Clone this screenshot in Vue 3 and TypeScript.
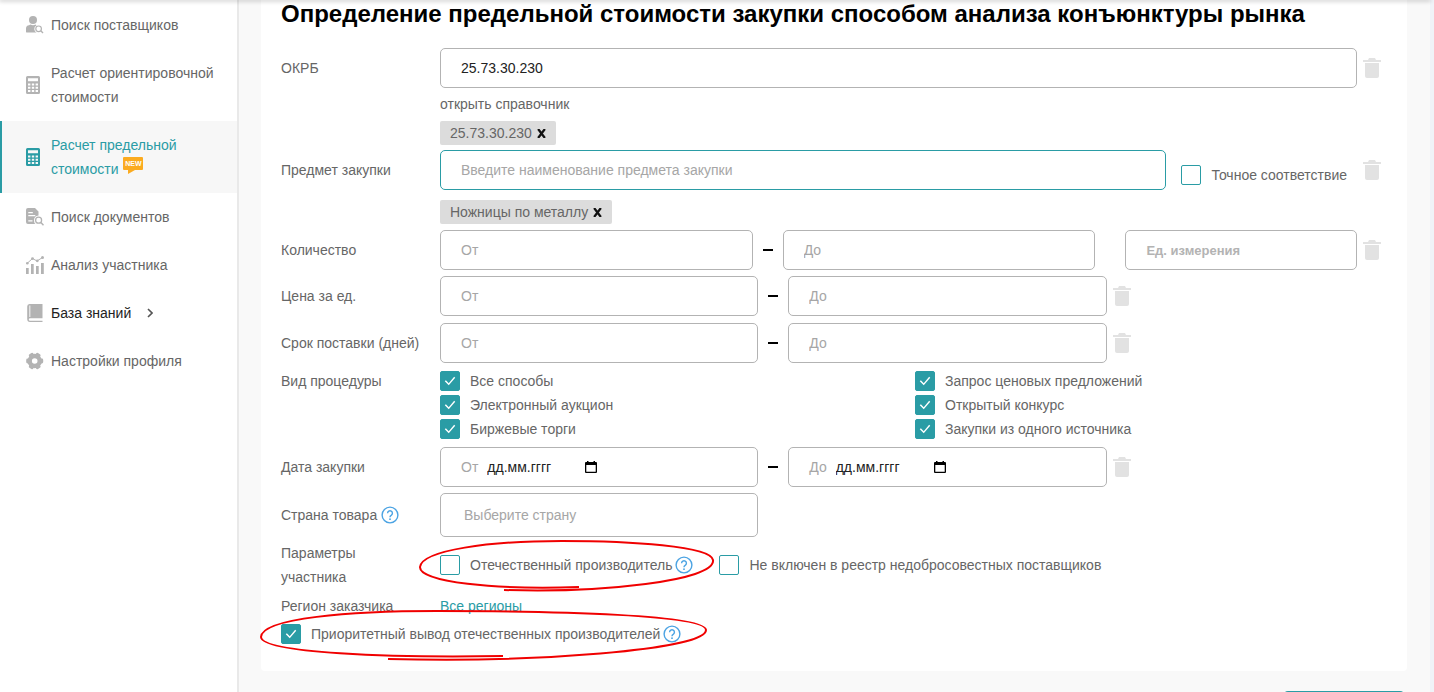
<script setup lang="ts">
import { ref } from 'vue'

interface MenuItem {
  icon: 'supplier' | 'calc' | 'docs' | 'chart' | 'book' | 'gear'
  label: string
  active?: boolean
  fresh?: boolean
  parent?: boolean
}

const menu: MenuItem[] = [
  { icon: 'supplier', label: 'Поиск поставщиков' },
  { icon: 'calc', label: 'Расчет ориентировочной стоимости' },
  { icon: 'calc', label: 'Расчет предельной стоимости', active: true, fresh: true },
  { icon: 'docs', label: 'Поиск документов' },
  { icon: 'chart', label: 'Анализ участника' },
  { icon: 'book', label: 'База знаний', parent: true },
  { icon: 'gear', label: 'Настройки профиля' },
]

const ranges = ref([
  { id: 'price', label: 'Цена за ед.', from: '', to: '' },
  { id: 'term', label: 'Срок поставки (дней)', from: '', to: '' },
])

const procedures = ref([
  { id: 'all', label: 'Все способы', on: true },
  { id: 'quote', label: 'Запрос ценовых предложений', on: true },
  { id: 'auction', label: 'Электронный аукцион', on: true },
  { id: 'tender', label: 'Открытый конкурс', on: true },
  { id: 'exchange', label: 'Биржевые торги', on: true },
  { id: 'single', label: 'Закупки из одного источника', on: true },
])

const dates = ref([
  { id: 'from', label: 'От', value: '' },
  { id: 'to', label: 'До', value: '' },
])

const code = ref('25.73.30.230')
const subject = ref('')
const exact = ref(false)
const qtyFrom = ref('')
const qtyTo = ref('')
const unit = ref('')
const country = ref('')
const domestic = ref(false)
const reliable = ref(false)
const priority = ref(true)
const codeTags = ref(['25.73.30.230'])
const subjectTags = ref(['Ножницы по металлу'])
</script>

<template>
  <div class="page">
    <svg class="defs" aria-hidden="true">
      <symbol id="trash" viewBox="0 0 18 20">
        <path d="M6 0h6l1 2h5v2H0V2h5zM2 5h14v13a2 2 0 0 1-2 2H4a2 2 0 0 1-2-2z" />
      </symbol>
      <symbol id="help" viewBox="0 0 18 18">
        <circle cx="9" cy="9" r="7.9" fill="none" stroke="currentColor" stroke-width="1.4" />
        <path d="M6.6 7.2a2.4 2.4 0 1 1 3.6 2.1c-.8.5-1.2.9-1.2 1.9" fill="none" stroke="currentColor" stroke-width="1.4" />
        <circle cx="9" cy="13.2" r="0.9" fill="currentColor" />
      </symbol>
    </svg>
    <header class="topbar"></header>

    <nav class="sidebar">
      <a v-for="item in menu" :key="item.label" href="#" class="item" :class="{ active: item.active, parent: item.parent }">
        <svg class="icon" viewBox="0 0 18 18" aria-hidden="true">
          <g v-if="item.icon === 'supplier'">
            <circle cx="7" cy="4" r="4" />
            <path d="M0 16v-3.500Q0 9.500 3 9.200L4.500 8.500Q7 10 9.500 8.500L10.500 9.200Q8 10.500 8.300 13.200Q8.500 15.500 10.500 16.500H1.500Q0 16.500 0 16z" />
            <circle cx="12.600" cy="12.800" r="2.800" fill="none" stroke="currentColor" stroke-width="1.200" />
            <path d="M14.800 14.800L17 17" stroke="currentColor" stroke-width="1.400" />
          </g>
          <path
            v-else-if="item.icon === 'calc'"
            fill-rule="evenodd"
            d="M1.500 0h11Q14 0 14 1.500v15Q14 18 12.500 18h-11Q0 18 0 16.500v-15Q0 0 1.500 0zM2 2.300v3h10v-3zM2 7.500v2h2.400v-2zM5.800 7.500v2h2.400v-2zM9.600 7.500v2H12v-2zM2 10.800v2h2.400v-2zM5.800 10.800v2h2.400v-2zM9.600 10.800v2H12v-2zM2 14v2h2.400v-2zM5.800 14v2h2.400v-2zM9.600 14v2H12v-2z"
          />
          <g v-else-if="item.icon === 'docs'">
            <path
              fill-rule="evenodd"
              d="M2 0h7l3.500 3.500V7.600Q8 8 8 12.500Q8 15 9.500 16H2Q0 16 0 14V2Q0 0 2 0zM2.300 4v1.200h4.500V4zM2.300 7v1.200h7V7zM2.300 12.200v1.200h4.200v-1.200z"
            />
            <circle cx="12.600" cy="12.200" r="3" fill="none" stroke="currentColor" stroke-width="1.300" />
            <path d="M14.900 14.500L17.500 17.200" stroke="currentColor" stroke-width="1.500" />
          </g>
          <g v-else-if="item.icon === 'chart'">
            <path d="M0 12h2.700v6H0zM5 8h2.700v10H5zM10 10h2.700v8H10zM15 7h2.800v11H15z" />
            <path d="M1 7.500L6.500 2.500L11 5L16.500 1.500" fill="none" stroke="currentColor" stroke-width="1" />
            <circle cx="1.300" cy="7.200" r="1.300" />
            <circle cx="6.500" cy="2.600" r="1.400" />
            <circle cx="11.300" cy="4.800" r="1.400" />
            <circle cx="16.500" cy="1.600" r="1.500" />
          </g>
          <path
            v-else-if="item.icon === 'book'"
            fill-rule="evenodd"
            d="M3.500 0H16.500V14.200H3.800Q2.600 14.500 2.800 15.800Q3 16.800 4 16.800H16.500V18H4Q1.200 18 1.200 15V2.500Q1.200 0 3.500 0zM3.400 1.500v11.500h.9V1.500z"
          />
          <g v-else>
            <circle cx="8.700" cy="9" r="5" fill="none" stroke="currentColor" stroke-width="4.400" />
            <g v-for="a in [30, 90, 150, 210, 270, 330]" :key="a">
              <rect x="6.200" y="0.500" width="5" height="4" rx="1.400" :transform="`rotate(${a} 8.700 9)`" />
            </g>
          </g>
        </svg>
        <span class="text">
          {{ item.label }}
          <span v-if="item.fresh" class="new">NEW</span>
          <svg v-if="item.parent" class="chevron" viewBox="0 0 6 10" aria-hidden="true">
            <path d="M1 1l4 4-4 4" fill="none" stroke="currentColor" stroke-width="1.600" />
          </svg>
        </span>
      </a>
    </nav>

    <main class="main">
      <form class="card" @submit.prevent>
        <h1>Определение предельной стоимости закупки способом анализа конъюнктуры рынка</h1>

        <div class="row">
          <label class="name" for="code">ОКРБ</label>
          <div class="wide">
            <input id="code" v-model="code" class="field" type="text" />
            <button class="trash" type="button" aria-label="Очистить ОКРБ"><svg><use href="#trash" /></svg></button>
          </div>
          <div class="under">
            <a href="#" class="directory">открыть справочник</a>
            <div class="tags">
              <span v-for="tag in codeTags" :key="tag" class="tag">
                {{ tag }}
                <button type="button" :aria-label="`Убрать ${tag}`">
                  <svg viewBox="0 0 8 8"><path d="M1 0l6 8M7 0L1 8" /></svg>
                </button>
              </span>
            </div>
          </div>
        </div>

        <div class="row">
          <label class="name" for="subject">Предмет закупки</label>
          <div class="wide">
            <div class="subject">
              <input id="subject" v-model="subject" class="field focus" type="text" placeholder="Введите наименование предмета закупки" />
              <label class="check exact"><input v-model="exact" type="checkbox" />Точное соответствие</label>
            </div>
            <button class="trash" type="button" aria-label="Очистить предмет закупки"><svg><use href="#trash" /></svg></button>
          </div>
          <div class="under second">
            <div class="tags">
              <span v-for="tag in subjectTags" :key="tag" class="tag">
                {{ tag }}
                <button type="button" :aria-label="`Убрать ${tag}`">
                  <svg viewBox="0 0 8 8"><path d="M1 0l6 8M7 0L1 8" /></svg>
                </button>
              </span>
            </div>
          </div>
        </div>

        <div class="row">
          <label class="name" for="qty-from">Количество</label>
          <div class="wide">
            <div class="quantity">
              <input id="qty-from" v-model="qtyFrom" class="field" type="text" placeholder="От" />
              <span class="dash"></span>
              <input v-model="qtyTo" class="field" type="text" placeholder="До" aria-label="Количество до" />
              <span></span>
              <input v-model="unit" class="field unit" type="text" placeholder="Ед. измерения" aria-label="Ед. измерения" />
            </div>
            <button class="trash" type="button" aria-label="Очистить количество"><svg><use href="#trash" /></svg></button>
          </div>
        </div>

        <div class="ranges">
          <div v-for="r in ranges" :key="r.id" class="row">
            <label class="name" :for="r.id">{{ r.label }}</label>
            <div class="narrow">
              <div class="range">
                <input :id="r.id" v-model="r.from" class="field" type="text" placeholder="От" />
                <span class="dash"></span>
                <input v-model="r.to" class="field" type="text" placeholder="До" :aria-label="`${r.label} до`" />
              </div>
              <button class="trash" type="button" :aria-label="`Очистить ${r.label}`"><svg><use href="#trash" /></svg></button>
            </div>
          </div>
        </div>

        <div class="row" role="group" aria-labelledby="proc">
          <span id="proc" class="name short">Вид процедуры</span>
          <div class="checks">
            <label v-for="p in procedures" :key="p.id" class="check"><input v-model="p.on" type="checkbox" />{{ p.label }}</label>
          </div>
        </div>

        <div class="row">
          <label class="name" for="date-from">Дата закупки</label>
          <div class="narrow">
            <div class="range">
              <template v-for="(d, i) in dates" :key="d.id">
                <span v-if="i > 0" class="dash"></span>
                <div class="field date">
                  <label :for="`date-${d.id}`">{{ d.label }}</label>
                  <input :id="`date-${d.id}`" v-model="d.value" type="text" placeholder="дд.мм.гггг" />
                  <button type="button" aria-label="Открыть календарь">
                    <svg viewBox="0 0 12 12"><path fill-rule="evenodd" d="M2 0h1.500v1h5V0H10v1h1q1 0 1 1v9q0 1-1 1H1q-1 0-1-1V2q0-1 1-1h1zM1.300 4v6.700h9.400V4z" /></svg>
                  </button>
                </div>
              </template>
            </div>
            <button class="trash" type="button" aria-label="Очистить дату закупки"><svg><use href="#trash" /></svg></button>
          </div>
        </div>

        <div class="row">
          <label class="name tall" for="country">Страна товара <svg class="help"><use href="#help" /></svg></label>
          <div class="narrow">
            <div class="range">
              <select id="country" v-model="country" class="field country">
                <option value="">Выберите страну</option>
              </select>
            </div>
          </div>
        </div>

        <div class="last">
          <div class="row" role="group" aria-labelledby="member">
            <span id="member" class="name short">Параметры<br />участника</span>
            <div class="params">
              <div class="marked">
                <label class="check"><input v-model="domestic" type="checkbox" />Отечественный производитель</label>
                <svg class="help"><use href="#help" /></svg>
                <svg class="loop first" viewBox="416 536 300 60" aria-hidden="true">
                  <path d="M504 590C600 593 716 581 713 560C711 546 630 541 562 541C490 541 422 550 420 567C419 582 495 590 579 587" />
                </svg>
              </div>
              <label class="check"><input v-model="reliable" type="checkbox" />Не включен в реестр недобросовестных поставщиков</label>
            </div>
          </div>

          <div class="row region-row">
            <span class="name short">Регион заказчика</span>
            <a href="#" class="region">Все регионы</a>
          </div>

          <div class="marked">
            <label class="check"><input v-model="priority" type="checkbox" />Приоритетный вывод отечественных производителей</label>
            <svg class="help"><use href="#help" /></svg>
            <svg class="loop second" viewBox="258 606 452 60" aria-hidden="true">
              <path d="M388 660C530 664 706 651 706 631C706 616 560 612 437 612C350 612 262 619 261 638C262 654 390 659 503 657" />
            </svg>
          </div>
        </div>
      </form>
      <div class="actions"><button type="submit" class="submit">Рассчитать</button></div>
    </main>
  </div>
</template>

<style>
body {
  margin: 0;
}
</style>

<style scoped>
* {
  box-sizing: border-box;
}
.page {
  display: flex;
  height: 100vh;
  overflow: hidden;
  background: #f9f9f9;
  border-right: 4px solid #f0f3f8;
  font: 14px/24px 'Liberation Sans', Arial, sans-serif;
  color: #666;
}
.defs {
  position: absolute;
  width: 0;
  height: 0;
}
.topbar {
  position: fixed;
  inset: 0 4px auto 0;
  height: 0;
  z-index: 2;
  box-shadow: 0 0 4px 1px rgba(0, 0, 0, 0.3);
}
button {
  padding: 0;
  border: 0;
  background: none;
  font: inherit;
  cursor: pointer;
}
a {
  color: inherit;
  text-decoration: none;
}

.sidebar {
  flex: 0 0 239px;
  padding-top: 1px;
  background: #fff;
  border-right: 2px solid #e9e9e9;
}
.item {
  display: flex;
  align-items: center;
  gap: 7px;
  padding: 12px 16px 12px 24px;
  border-left: 2px solid transparent;
}
.item.active {
  border-color: #2a9ca5;
  background: #f7f7f7;
  color: #2a9ca5;
}
.item.parent {
  color: #222;
}
.icon {
  flex: none;
  width: 18px;
  height: 18px;
  color: #b3b3b3;
  fill: currentColor;
}
.active .icon {
  color: #2a9ca5;
}
.new {
  display: inline-block;
  position: relative;
  width: 20px;
  height: 13px;
  margin-left: 1px;
  border-radius: 1px;
  background: #fbab20;
  color: #fff;
  font-size: 7px;
  font-weight: bold;
  line-height: 13px;
  text-align: center;
  vertical-align: 8px;
  margin-bottom: -8px;
  margin-top: -8px;
}
.new::after {
  content: '';
  position: absolute;
  left: 5px;
  top: 13px;
  border: solid transparent;
  border-width: 0 7px 4px 0;
  border-top: 4px solid #fbab20;
  border-bottom: 0;
}
.chevron {
  width: 6px;
  height: 10px;
  margin-left: 12px;
  color: #555;
}

.main {
  flex: 1;
  min-width: 0;
  padding: 0 23px 0 22px;
}
.card {
  display: flex;
  flex-direction: column;
  gap: 6px;
  padding: 0 26px 25px 20px;
  background: #fff;
  border-radius: 0 0 4px 4px;
}
h1 {
  margin: 0 0 14px;
  font-size: 24px;
  line-height: 28px;
  color: #000;
  white-space: nowrap;
}
.row {
  display: grid;
  grid-template-columns: 159px 1fr;
}
.name {
  line-height: 40px;
}
.name.short {
  line-height: 24px;
}
.name.tall {
  display: flex;
  align-items: center;
  gap: 4px;
}
.wide {
  display: grid;
  grid-template-columns: 1fr 18px;
  gap: 6px;
  align-items: center;
}
.ranges {
  display: flex;
  flex-direction: column;
  gap: 7px;
}
.narrow {
  display: grid;
  grid-template-columns: 17fr 7fr;
  align-items: center;
}
.narrow .trash {
  margin-left: 6px;
}
.range {
  display: grid;
  grid-template-columns: 1fr 30px 1fr;
  align-items: center;
}
.quantity {
  display: grid;
  grid-template-columns: 27fr 30px 27fr 30px 20fr;
  align-items: center;
}
.subject {
  display: flex;
  gap: 15px;
}
.subject .field {
  flex: 1;
}
.exact {
  padding: 10px 10px 0 0;
}
.field {
  width: 100%;
  min-width: 0;
  height: 40px;
  padding: 0 20px;
  border: 1px solid #b3b3b3;
  border-radius: 5px;
  outline: 0;
  background: #fff;
  font: inherit;
  color: #222;
}
.field.focus {
  border-color: #2a9ca5;
}
::placeholder {
  color: #a6a6a6;
  opacity: 1;
}
.unit::placeholder {
  font-size: 13px;
  font-weight: bold;
  color: #b3b3b3;
}
.dash {
  justify-self: center;
  width: 10px;
  height: 2px;
  background: #000;
}
.trash {
  width: 18px;
  height: 20px;
}
.trash svg {
  display: block;
  width: 18px;
  height: 20px;
  fill: #e2e2e2;
}
.under {
  grid-column: 2;
  padding-top: 4px;
}
.under.second {
  padding-top: 5px;
}
.directory {
  display: block;
}
.tags {
  display: flex;
  gap: 6px;
  padding-top: 5px;
}
.row:nth-of-type(1) .tags {
  margin-bottom: -1px;
}
.tag {
  display: flex;
  gap: 5px;
  padding: 0 10px;
  border-radius: 2px;
  background: #dcdcdc;
}
.tag button {
  display: flex;
  align-items: center;
}
.tag svg {
  width: 9px;
  height: 9px;
  stroke: #111;
  stroke-width: 2;
}
.checks {
  display: grid;
  grid-template-columns: 1fr 1fr;
  column-gap: 9px;
}
.check {
  display: flex;
  align-items: center;
  gap: 10px;
  white-space: nowrap;
}
.check input {
  appearance: none;
  flex: none;
  width: 20px;
  height: 20px;
  margin: 0;
  border: 1px solid #2a9ca5;
  border-radius: 2px;
  background: #fff;
}
.check input:checked {
  background: #2a9ca5;
}
.check input:checked::after {
  content: '';
  display: block;
  width: 18px;
  height: 18px;
  background: #fff;
  clip-path: polygon(21% 52%, 27% 46%, 43% 63%, 73% 27%, 79% 32%, 43% 74%);
}
.date {
  display: flex;
  align-items: center;
}
.date label {
  color: #a6a6a6;
}
.date input {
  width: 98px;
  margin-left: 9px;
  padding: 0;
  border: 0;
  outline: 0;
  font: inherit;
  color: #222;
}
.date ::placeholder {
  color: #222;
}
.date svg {
  display: block;
  width: 12px;
  height: 12px;
}
.country {
  appearance: none;
  height: 44px;
  padding: 0 23px;
  color: #a6a6a6;
}
.help {
  flex: none;
  width: 18px;
  height: 18px;
  color: #4ba3e3;
}
.last {
  display: flex;
  flex-direction: column;
  gap: 4px;
  margin-top: -2px;
}
.params {
  display: flex;
  align-items: center;
  gap: 26px;
}
.marked {
  position: relative;
  display: flex;
  align-items: center;
  gap: 3px;
}
.loop {
  position: absolute;
  height: 60px;
  fill: none;
  stroke: #f00000;
  stroke-width: 2;
  pointer-events: none;
}
.loop.first {
  left: -24px;
  top: -17px;
  width: 300px;
}
.loop.second {
  left: -23px;
  top: -17px;
  width: 452px;
}
.region-row {
  padding-top: 1px;
}
.region {
  color: #2a9ca5;
}
.actions {
  display: flex;
  justify-content: flex-end;
  padding: 20px 3px 0;
}
.submit {
  width: 120px;
  height: 40px;
  border-radius: 4px;
  background: #2a9ca5;
  color: #fff;
}
</style>
